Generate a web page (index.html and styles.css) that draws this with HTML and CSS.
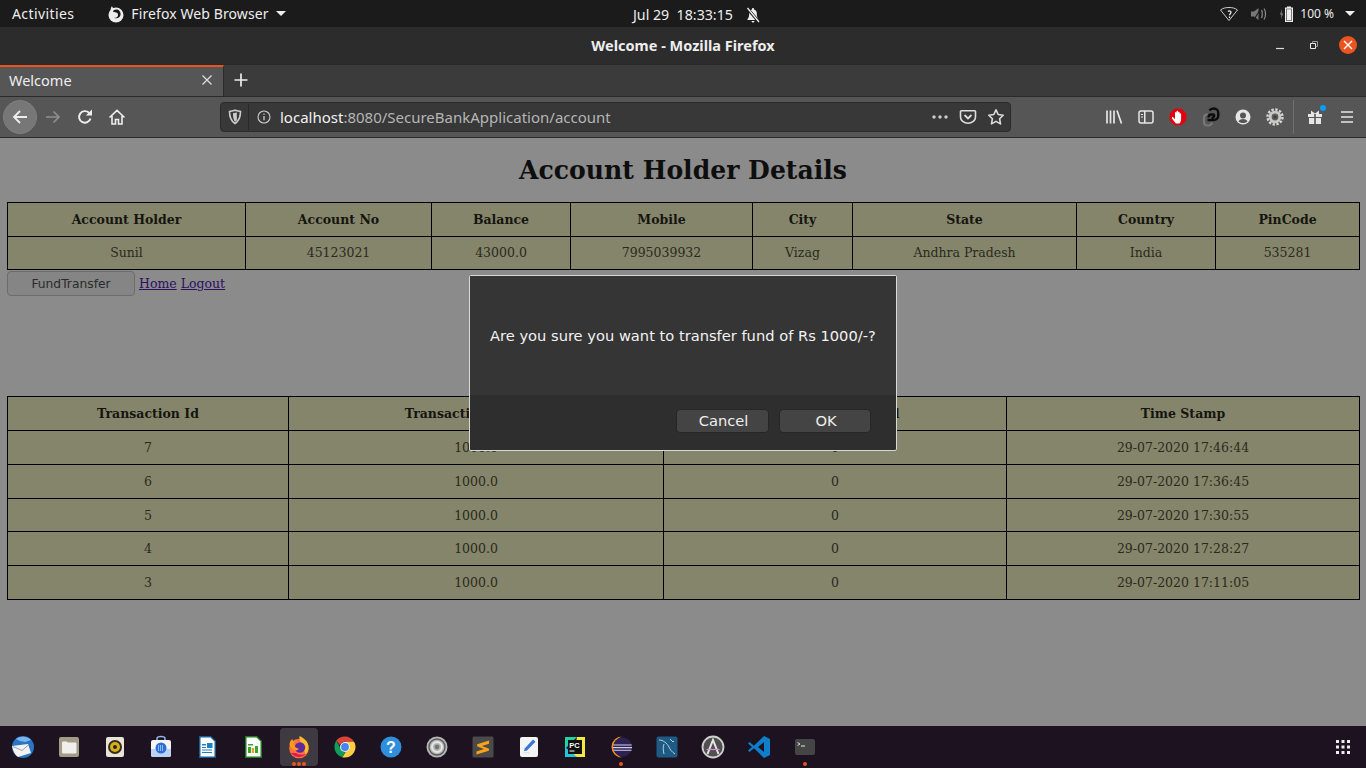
FILE: index.html
```html
<!DOCTYPE html>
<html lang="en">
<head>
	<meta charset="UTF-8" />
	<title>Welcome</title>
	<link rel="stylesheet" href="styles.css">
</head>
<body>

<header class="topbar">
	<div class="topbar-left">
		<span class="activities">Activities</span>
		<span class="app-menu">
			<svg width="16" height="18" viewBox="0 0 16 18"><circle cx="8" cy="10" r="7.500" fill="#eee"/><path fill="#eee" d="M3 6c-.6-1.800-.2-3.500 1-5 .2 1.500 1.200 2.300 3 2.500l1 3z"/><path fill="#1b1b1b" d="M5.500 5.500c1.800-1.300 4.500-1.200 6 .5 1.600 1.800 1.500 4.700-.3 6.300-1.500 1.300-3.700 1.400-5.200.4 1.500.2 3-.3 3.700-1.500.7-1.300.3-2.800-.9-3.400-1-.5-2.200-.2-3.300-.7-.4-.2-.5-.9 0-1.600z"/></svg>
			Firefox Web Browser
			<i class="caret"></i>
		</span>
	</div>
	<div class="clock">
		<span>Jul 29&nbsp;&nbsp;18:33:15</span>
		<svg width="16" height="16" viewBox="0 0 16 16"><path fill="#eee" d="M8 1c-.6 0-1 .4-1 1v.6C5.300 3 4.200 4.500 4.200 6.500c0 3-.6 4.500-1.700 5.500v1h11v-1c-1.100-1-1.700-2.500-1.700-5.500 0-2-1.100-3.500-2.800-3.900V2c0-.6-.4-1-1-1zM6.500 14c0 .8.700 1.500 1.500 1.500s1.500-.7 1.500-1.500z"/><path stroke="#1b1b1b" stroke-width="3" d="M2 1l12 14"/><path stroke="#eee" stroke-width="1.300" d="M2.500 1l11.500 14"/></svg>
	</div>
	<div class="status">
		<svg width="20" height="16" viewBox="0 0 20 16"><path fill="none" stroke="#ccc" d="M1.500 4C4 2 7 1.500 10 1.500s6 .5 8.500 2.500L10 14.500z"/><path fill="none" stroke="#eee" stroke-width="1.300" d="M9 5.500c1-1 3.200-.6 3 1-.1 1.200-1.500 1.300-1.500 2.800M10.500 10.500v1.500"/></svg>
		<svg width="18" height="16" viewBox="0 0 18 16"><path fill="#777" d="M1 5.500h3L8.500 2v12L4 10.500H1z"/><path fill="none" stroke="#8d8d8d" stroke-width="1.200" d="M11.500 4c1 1.200 1 6.500 0 8M14 2.500c2 2.500 2 8.500 0 11"/><path stroke="#1b1b1b" stroke-width="1.200" d="M3 15L12 1"/></svg>
		<span class="battery-group">
			<svg width="18" height="18" viewBox="0 0 18 18"><path fill="#8d8d8d" d="M3 4L1 9.500h1.500L2 14l2-5.500H2.500z"/><path fill="#eee" d="M8 1.500h4v1h2v14.500H6V2.500h2zm-.8 2.200v12.100h5.600V3.700z"/><rect x="7.700" y="4.200" width="4.600" height="11.100" fill="#eee"/></svg>
			<span>100 %</span>
		</span>
		<i class="caret"></i>
	</div>
</header>

<div class="titlebar">
	<span class="window-title">Welcome - Mozilla Firefox</span>
	<div class="window-buttons">
		<svg width="10" height="10" viewBox="0 0 10 10"><path stroke="#ddd" stroke-width="1.200" d="M1 8.500h8"/></svg>
		<svg width="10" height="10" viewBox="0 0 10 10"><path fill="none" stroke="#eee" d="M1.500 3.500h5v5h-5z"/><path fill="none" stroke="#999" d="M3.500 3.500v-2h5v5h-2"/></svg>
		<span class="close-btn">
			<svg width="10" height="10" viewBox="0 0 10 10"><path stroke="#fff" stroke-width="1.300" d="M1 1l8 8M9 1l-8 8"/></svg>
		</span>
	</div>
</div>

<div class="tabbar">
	<div class="tab">
		<span>Welcome</span>
		<svg width="12" height="12" viewBox="0 0 12 12"><path stroke="#ddd" stroke-width="1.300" d="M1.500 1.500l9 9M10.500 1.500l-9 9"/></svg>
	</div>
	<svg class="new-tab" width="16" height="16" viewBox="0 0 16 16"><path stroke="#eee" stroke-width="1.700" d="M8 1.500v13M1.500 8h13"/></svg>
</div>

<div class="toolbar">
	<span class="back-btn">
		<svg width="18" height="18" viewBox="0 0 18 18"><path fill="none" stroke="#eee" stroke-width="1.800" d="M16 9H3M9 3L3 9l6 6"/></svg>
	</span>
	<svg class="forward-btn" width="18" height="18" viewBox="0 0 18 18"><path fill="none" stroke="#8e8e8e" stroke-width="1.700" d="M2 9h13M9.500 3.500L15 9l-5.500 5.500"/></svg>
	<svg class="reload-btn" width="18" height="18" viewBox="0 0 18 18"><path fill="none" stroke="#eee" stroke-width="1.900" d="M14.500 10.500A5.800 5.800 0 1 1 13 4.800"/><path fill="#eee" d="M9.800 7.500H16V1.500z"/></svg>
	<svg class="home-btn" width="18" height="18" viewBox="0 0 18 18"><path fill="none" stroke="#eee" stroke-width="1.600" d="M1.500 9.500L9 2.300l7.500 7.200M4 8v8h3.500v-4.500h3V16H14V8"/></svg>
	<div class="urlbar">
		<svg class="shield" width="14" height="16" viewBox="0 0 14 16"><path fill="none" stroke="#ccc" stroke-width="1.600" d="M1.500 2.500C4 2 5.500 1.700 7 1.200c1.500.5 3 .8 5.500 1.300 0 6-1.500 9.500-5.500 12C3 12 1.500 8.500 1.500 2.500z"/><path fill="#ccc" d="M5 4.300l3.800-.8v8L7 12.700C5.500 11 5 8 5 4.300z"/></svg>
		<span class="url-sep"></span>
		<svg class="info-icon" width="14" height="14" viewBox="0 0 14 14"><circle cx="7" cy="7" r="6" fill="none" stroke="#ccc" stroke-width="1.100"/><path stroke="#ccc" stroke-width="1.300" d="M7 6v4.300M7 3.500v1.300"/></svg>
		<span class="url-text"><b>localhost</b>:8080/SecureBankApplication/account</span>
		<svg class="dots" width="16" height="4" viewBox="0 0 16 4"><circle cx="2" cy="2" r="1.700" fill="#ccc"/><circle cx="8" cy="2" r="1.700" fill="#ccc"/><circle cx="14" cy="2" r="1.700" fill="#ccc"/></svg>
		<svg class="pocket" width="18" height="16" viewBox="0 0 18 16"><path fill="none" stroke="#ddd" stroke-width="1.600" d="M2.300 1.800h13.400c.5 0 .8.300.8.800V8c0 3.500-3.500 6.300-7.500 6.300S1.500 11.500 1.500 8V2.600c0-.5.300-.8.800-.8z"/><path fill="none" stroke="#ddd" stroke-width="1.800" d="M5.500 6L9 9.500 12.500 6"/></svg>
		<svg class="star" width="18" height="18" viewBox="0 0 18 18"><path fill="none" stroke="#ddd" stroke-width="1.600" stroke-linejoin="round" d="M9 1.800l2.200 4.700 5 .7-3.600 3.500.9 5.200L9 13.400l-4.500 2.500.9-5.200-3.600-3.500 5-.7z"/></svg>
	</div>
	<div class="toolbar-right">
		<svg class="tool-icon" width="18" height="16" viewBox="0 0 18 16"><path stroke="#e6e6e6" stroke-width="1.700" d="M2 1.500v13M5.500 1.500v13M9 1.500v13M12 1.500l4.500 13"/></svg>
		<svg class="tool-icon" width="16" height="16" viewBox="0 0 16 16"><rect x="1" y="2" width="14" height="12" rx="2" fill="none" stroke="#e6e6e6" stroke-width="1.500"/><path fill="#e6e6e6" d="M6 2h1.500v12H6zM3 5h2v1H3zM3 7.500h2v1H3z"/></svg>
		<svg class="tool-icon" width="18" height="18" viewBox="0 0 18 18"><path fill="#e3000f" d="M5.500.7h7l4.800 4.800v7l-4.800 4.800h-7L.7 12.500v-7z"/><path fill="#fff" d="M7 15.500c-1.200-1-3-3.500-4-5.200-.5-.9.700-1.600 1.300-.9l1.700 1.900V4.800c0-1 1.400-1 1.500 0V3.500c0-1 1.500-1 1.600 0v1c.1-1 1.500-1 1.500 0v1.300c.2-.9 1.500-.8 1.500.2v5c0 2.100-.8 3.700-1.700 4.500z"/></svg>
		<svg class="tool-icon" width="18" height="20" viewBox="0 0 18 20"><path fill="none" stroke="#777" stroke-width="2.200" d="M6 7.500H5C3 7.500 2 9 2 10.500V15c0 2 1.300 3.500 3.300 3.500h1.400c1.600 0 2.800-1 3.300-3"/><path fill="none" stroke="#0c0c0c" stroke-width="2.400" d="M6.500 10.500c0-2 1.200-3 3-3h1.500c1 0 1.500 1 1 2-.5.800-1.200 1.500-2.500 1.500M5.500 13h6c2.500 0 4.800-1.500 4.800-4.500V6c0-2.700-1.800-4.500-4.500-4.500-2 0-3.400.7-4.300 2"/></svg>
		<svg class="tool-icon" width="16" height="16" viewBox="0 0 16 16"><circle cx="8" cy="8" r="7.500" fill="#e6e6e6"/><circle cx="8" cy="6.500" r="3" fill="#555"/><path fill="#555" d="M3.500 12.500c1-2 2.700-2.600 4.500-2.600s3.500.6 4.500 2.600C11 13.700 9.500 14 8 14s-3-.3-4.500-1.500z"/></svg>
		<svg class="tool-icon" width="18" height="18" viewBox="0 0 18 18"><circle cx="9" cy="9" r="6.300" fill="#c9c9c9"/><circle cx="9" cy="9" r="7.500" fill="none" stroke="#d6d6d6" stroke-width="2.400" stroke-dasharray="2.400 1.530"/><circle cx="9" cy="9" r="3.400" fill="#5e5e58"/><circle cx="9" cy="9" r="1.500" fill="#3e3e3a"/></svg>
		<span class="toolbar-sep"></span>
		<span class="gift">
			<svg width="18" height="18" viewBox="0 0 18 18"><path fill="#e6e6e6" d="M2 6h6.200v3H2zM9.800 6H16v3H9.800zM3 10h5.200v6H3zM9.800 10H15v6H9.800zM5 2.500l4 3 4-3v3.500H5z"/></svg>
			<i class="gift-dot"></i>
		</span>
		<svg class="burger" width="14" height="14" viewBox="0 0 14 14"><path stroke="#e6e6e6" stroke-width="1.700" d="M1 2h12M1 7h12M1 12h12"/></svg>
	</div>
</div>

<main class="page">
	<h1>Account Holder Details</h1>
	<table class="details summary">
		<colgroup>
			<col class="a1"><col class="a2"><col class="a3"><col class="a4"><col class="a5"><col class="a6"><col class="a7"><col class="a8">
		</colgroup>
		<tr>
			<th>Account Holder</th><th>Account No</th><th>Balance</th><th>Mobile</th><th>City</th><th>State</th><th>Country</th><th>PinCode</th>
		</tr>
		<tr>
			<td>Sunil</td><td>45123021</td><td>43000.0</td><td>7995039932</td><td>Vizag</td><td>Andhra Pradesh</td><td>India</td><td>535281</td>
		</tr>
	</table>
	<div class="actions">
		<button class="fund-btn">FundTransfer</button>
		<a href="#">Home</a>
		<a href="#">Logout</a>
	</div>
	<table class="details history">
		<colgroup>
			<col class="t1"><col class="t2"><col class="t3"><col class="t4">
		</colgroup>
		<tr>
			<th>Transaction Id</th><th>Transaction Amount</th><th>Manager Approval</th><th>Time Stamp</th>
		</tr>
		<tr><td>7</td><td>1000.0</td><td>0</td><td>29-07-2020 17:46:44</td></tr>
		<tr><td>6</td><td>1000.0</td><td>0</td><td>29-07-2020 17:36:45</td></tr>
		<tr><td>5</td><td>1000.0</td><td>0</td><td>29-07-2020 17:30:55</td></tr>
		<tr><td>4</td><td>1000.0</td><td>0</td><td>29-07-2020 17:28:27</td></tr>
		<tr><td>3</td><td>1000.0</td><td>0</td><td>29-07-2020 17:11:05</td></tr>
	</table>

	<div class="dialog">
		<div class="dialog-body">Are you sure you want to transfer fund of Rs 1000/-?</div>
		<div class="dialog-foot">
			<button class="dialog-btn cancel">Cancel</button>
			<button class="dialog-btn ok">OK</button>
		</div>
	</div>
</main>

<footer class="dock">
	<span class="dock-item">
		<svg width="26" height="26" viewBox="0 0 26 26"><circle cx="13" cy="13" r="11" fill="#2a76c6"/><path fill="#7db4ea" d="M6 5c4-3 11-3 15 1l-6 2-5-1z"/><path fill="#f2f2f2" d="M2 12l16-2 3 9-13 4c-3-2-5-6-6-11z"/><path fill="none" stroke="#9aa4b0" d="M3 12.500l9 4 7-6"/></svg>
	</span>
	<span class="dock-item">
		<svg width="24" height="24" viewBox="0 0 24 24"><rect x="2" y="2" width="20" height="20" rx="2" fill="#a29b88"/><path fill="#f0efec" d="M5 8c0-1 .5-1.500 1.500-1.500h3l1.500 1h7c1 0 1.500.5 1.500 1.500v8c0 1-.5 1.500-1.500 1.500h-11C5.500 18.500 5 18 5 17z"/></svg>
	</span>
	<span class="dock-item">
		<svg width="24" height="24" viewBox="0 0 24 24"><rect x="3" y="2" width="18" height="20" rx="2" fill="#e8e4d6"/><circle cx="12" cy="12" r="7" fill="#322e20"/><circle cx="12" cy="12" r="5" fill="#d9ad1a"/><circle cx="12" cy="12" r="2" fill="#2a2616"/></svg>
	</span>
	<span class="dock-item">
		<svg width="24" height="24" viewBox="0 0 24 24"><path fill="none" stroke="#8fb4e6" stroke-width="1.500" d="M8 6V3.500C8 2 9.500 1.500 12 1.500s4 .5 4 2V6"/><rect x="2" y="5" width="20" height="17" rx="2" fill="#f5f5f5"/><path fill="#bcd2f3" d="M2 14h20v6c0 1-1 2-2 2H4c-1 0-2-1-2-2z"/><circle cx="12" cy="13" r="5.500" fill="#2c6fd6"/><path stroke="#fff" stroke-width="1" stroke-dasharray="1 1" d="M9 11h6M9 13h6M9 15h6"/></svg>
	</span>
	<span class="dock-item">
		<svg width="24" height="24" viewBox="0 0 24 24"><path fill="#185a92" d="M4 1h12l5 5v17H4z"/><path fill="#fff" d="M5.500 2.500H15.500L19.500 6.500v15h-14z"/><path fill="#1d80c4" d="M7 9h4v1.500H7zM7 12h4v1H7zM7 14.500h10v1H7zM7 17h10v1H7zM12 8h5.500v5H12z"/></svg>
	</span>
	<span class="dock-item">
		<svg width="24" height="24" viewBox="0 0 24 24"><path fill="#1f7a1f" d="M4 1h12l5 5v17H4z"/><path fill="#fff" d="M5.500 2.500H15.500L19.500 6.500v15h-14z"/><path fill="#3aa535" d="M7 9h5v1.500H7zM7 12h3v6H7zM14 11h3v7h-3z"/><path fill="#e6a32a" d="M10.700 13h2.500v5h-2.500z"/></svg>
	</span>
	<span class="dock-item active">
		<svg width="24" height="24" viewBox="0 0 24 24"><circle cx="12" cy="13.500" r="9.800" fill="#ff7139"/><path fill="#ffbd2e" d="M12.500 1c3 1.500 7 4 8.300 7.500 1.500 4 .5 8-2 11l-3-8C14.500 8 12 5 12.500 1z"/><path fill="#e2175b" d="M4 18c4 5 11 5 15 1-3 1-8 1-10-1z"/><circle cx="13" cy="12.500" r="5.200" fill="#5a2ca0"/><path fill="#ff9a1f" d="M2.500 9C3 6 4.500 4.500 5.500 4c-.1 1 .3 1.700.7 2.200C7 5.500 8 5.300 9 5.500c-1 .5-1.800 1.200-2 2.500-.5 3 2 5.500 5 5.500-1 2-4 2.500-6 1-2-1.300-3.500-3.500-3.500-5.500z"/></svg>
		<span class="dock-dots"><i></i><i></i><i></i></span>
	</span>
	<span class="dock-item">
		<svg width="24" height="24" viewBox="0 0 24 24"><path fill="#db4437" d="M12 1.500c3.800 0 7.200 2 9 5.200H12c-2.300 0-4.300 1.400-5 3.600L3.300 5.500C5.300 3 8.400 1.500 12 1.500z"/><path fill="#0f9d58" d="M3.300 5.500L7.800 14c1 1.700 2.500 2.700 4.500 2.700l-3 5.500C4.800 21 1.500 16.800 1.500 12c0-2.400.7-4.700 1.800-6.500z"/><path fill="#ffcd40" d="M21 6.700c1 1.600 1.500 3.400 1.500 5.300 0 5.800-4.700 10.500-10.500 10.500H9.300l4-6.800c1.700-1.800 2-4.600.6-6.700l-1.900-2.300z"/><circle cx="12" cy="12" r="5" fill="#f1f1f1"/><circle cx="12" cy="12" r="3.900" fill="#4285f4"/></svg>
	</span>
	<span class="dock-item">
		<svg width="24" height="24" viewBox="0 0 24 24"><circle cx="12" cy="12" r="10.500" fill="#2f8fdc"/><text x="12" y="18" text-anchor="middle" class="help-mark">?</text></svg>
	</span>
	<span class="dock-item">
		<svg width="24" height="24" viewBox="0 0 24 24"><circle cx="12" cy="12" r="10.500" fill="#b7b7b7"/><circle cx="12" cy="12" r="8" fill="none" stroke="#5d5d5d" stroke-width="1.400"/><circle cx="12" cy="12" r="5" fill="none" stroke="#e6e6e6" stroke-width="2"/><circle cx="12" cy="12" r="2.400" fill="#777"/></svg>
	</span>
	<span class="dock-item">
		<svg width="24" height="24" viewBox="0 0 24 24"><rect x="1.500" y="1.500" width="21" height="21" rx="1.500" fill="#4a4a4a"/><path fill="#f9a21b" d="M18 5.500L7 9c-1.500.5-1.500 2 0 2.700l6 2.300-7.500 2.500v3L17 16c1.500-.5 1.500-2.300 0-2.800l-6-2.200 7-2.300z"/></svg>
	</span>
	<span class="dock-item">
		<svg width="24" height="24" viewBox="0 0 24 24"><rect x="3" y="2" width="18" height="20" rx="2" fill="#f4f4f4"/><path fill="#3b74d8" d="M16 4.500l2.500 2.200-8.500 8.800-3 .8.800-3z"/><path fill="#c8d4e8" d="M6.500 17.500h6v.7h-6z"/></svg>
	</span>
	<span class="dock-item">
		<svg width="24" height="24" viewBox="0 0 24 24"><path fill="#20d3a0" d="M2 2h12l-12 12z"/><path fill="#f5e642" d="M14 2h8v20H10z"/><path fill="#21c7d8" d="M2 12l12 10H2z"/><rect x="5" y="5" width="14" height="14" fill="#111"/><text x="6.300" y="12.500" class="pc-mark">PC</text><path stroke="#fff" stroke-width="1" d="M6.500 16h5"/></svg>
	</span>
	<span class="dock-item">
		<svg width="24" height="24" viewBox="0 0 24 24"><path fill="#f7941e" d="M13 1.500A10.500 10.500 0 1 0 13 22.500 11 11 0 0 1 13 1.500z"/><circle cx="13.500" cy="12" r="9.500" fill="#2c2255"/><path fill="#d6d0e8" d="M4.300 9.500h18.400v1H4.300zM4 12h19v1.200H4zM4.500 14.700h18v1H4.500z"/></svg>
		<i class="run-dot"></i>
	</span>
	<span class="dock-item">
		<svg width="24" height="24" viewBox="0 0 24 24"><rect x="1.500" y="1.500" width="21" height="21" rx="2" fill="#1d5b85"/><path fill="none" stroke="#b8cfdf" stroke-width="1" d="M4 5c4 0 8 3 10 7 1 2.500 3 5 6 7M9 9c-1 3-1 6 0 10M15 4l3 3 1-1"/></svg>
	</span>
	<span class="dock-item">
		<svg width="24" height="24" viewBox="0 0 24 24"><circle cx="12" cy="12" r="10.500" fill="#505050" stroke="#cfcfcf" stroke-width="1.800"/><path fill="none" stroke="#e6e6e6" stroke-width="2" d="M6.500 19L12 5l5.500 14"/><path stroke="#d98ad0" stroke-width="1.200" d="M5.500 14.500h13"/></svg>
	</span>
	<span class="dock-item">
		<svg width="24" height="24" viewBox="0 0 24 24"><path fill="#0f7fcc" d="M17 1l6 3v16l-6 3-10-9.700L2.500 17 1 15.500 5 12 1 8.500 2.500 7 7 10.700zM17 7l-6 5 6 5z"/></svg>
	</span>
	<span class="dock-item">
		<svg width="24" height="24" viewBox="0 0 24 24"><rect x="2" y="4" width="20" height="16" rx="2" fill="#454545"/><path fill="none" stroke="#e6e6e6" stroke-width=".9" d="M4.500 7.500l2.500 1.500-2.500 1.500"/><path stroke="#e6e6e6" d="M8 11h4"/></svg>
		<i class="run-dot"></i>
	</span>
	<span class="dock-grid">
		<svg width="16" height="16" viewBox="0 0 16 16"><g fill="#eee"><rect x="1" y="1" width="3" height="3"/><rect x="6.500" y="1" width="3" height="3"/><rect x="12" y="1" width="3" height="3"/><rect x="1" y="6.500" width="3" height="3"/><rect x="6.500" y="6.500" width="3" height="3"/><rect x="12" y="6.500" width="3" height="3"/><rect x="1" y="12" width="3" height="3"/><rect x="6.500" y="12" width="3" height="3"/><rect x="12" y="12" width="3" height="3"/></g></svg>
	</span>
</footer>

</body>
</html>
```

FILE: styles.css
```css
* {
	box-sizing: border-box;
}

html, body {
	height: 100%;
}

body {
	margin: 0;
	width: 1366px;
	height: 768px;
	overflow: hidden;
	display: flex;
	flex-direction: column;
	font-family: "Noto Sans", sans-serif;
	background: #8b8b8b;
}

svg {
	display: block;
	flex: none;
}

/* gnome top bar */
.topbar {
	height: 27px;
	background: #1b1b1b;
	color: #eee;
	font-size: 14px;
	display: flex;
	align-items: center;
	justify-content: space-between;
	padding: 0 12px;
	position: relative;
}

.topbar-left {
	display: flex;
	align-items: center;
	gap: 34px;
}

.activities {
	letter-spacing: .4px;
}

.app-menu {
	display: flex;
	align-items: center;
	gap: 7px;
	letter-spacing: .1px;
}

.caret {
	width: 0;
	height: 0;
	border-left: 5px solid transparent;
	border-right: 5px solid transparent;
	border-top: 5px solid #eee;
	display: block;
}

.clock {
	position: absolute;
	left: 633px;
	top: 5px;
	display: flex;
	gap: 12px;
	align-items: center;
	font-size: 14.2px;
}

.status {
	display: flex;
	align-items: center;
	gap: 11px;
	margin-right: -1px;
}

.battery-group {
	display: flex;
	align-items: center;
	gap: 3px;
	font-size: 12px;
}

/* window title bar */
.titlebar {
	height: 37px;
	background: #2c2c2c;
	color: #eee;
	font-size: 14.5px;
	font-weight: 700;
	display: flex;
	align-items: center;
	justify-content: center;
	padding-bottom: 2px;
	position: relative;
}

.window-buttons {
	position: absolute;
	right: 9px;
	top: 9px;
	display: flex;
	align-items: center;
	gap: 24px;
}

.close-btn {
	width: 18px;
	height: 18px;
	margin-left: -4px;
	border-radius: 50%;
	background: #e95420;
	display: flex;
	align-items: center;
	justify-content: center;
}

/* tabs */
.tabbar {
	height: 33px;
	background: #3b3b3b;
	display: flex;
	align-items: center;
	border-top: 1px solid #2a2a2a;
	border-bottom: 1px solid #2a2a2a;
}

.tab {
	width: 224px;
	height: 31px;
	background: #565656;
	border-top: 2px solid #e95420;
	border-right: 1px solid #2a2a2a;
	color: #eee;
	font-size: 14.5px;
	display: flex;
	align-items: center;
	justify-content: space-between;
	padding: 0 10px 3px 9px;
}

.new-tab {
	margin-left: 9px;
	margin-top: -1px;
}

/* nav toolbar */
.toolbar {
	height: 41px;
	background: #565656;
	border-bottom: 1px solid #2a2a2a;
	display: flex;
	align-items: center;
	position: relative;
	padding-left: 3px;
}

.back-btn {
	width: 34px;
	height: 34px;
	border-radius: 50%;
	border: 1px solid #7e7e7e;
	background: #777;
	display: flex;
	align-items: center;
	justify-content: center;
}

.forward-btn {
	margin-left: 7px;
}

.reload-btn {
	margin-left: 14px;
}

.home-btn {
	margin-left: 14px;
}

.urlbar {
	width: 791px;
	height: 30px;
	margin-left: 94px;
	background: #383838;
	border: 1px solid #2b2b2b;
	border-radius: 4px;
	color: #b5b5b5;
	font-size: 15px;
	display: flex;
	align-items: center;
	gap: 6px;
	padding: 0 5px 0 7px;
}

.url-sep {
	width: 1px;
	height: 26px;
	background: #2a2a2a;
}

.info-icon {
	margin-left: 2px;
}

.url-text {
	flex: 1;
	margin-left: 3px;
}

.url-text b {
	color: #f2f2f2;
	font-weight: 400;
}

.dots {
	margin-right: 5px;
}

.pocket {
	margin-right: 4px;
}

.toolbar-right {
	position: absolute;
	left: 1105px;
	top: 0;
	height: 40px;
	display: flex;
	align-items: center;
}

.tool-icon {
	margin-right: 15px;
}

.toolbar-sep {
	width: 1px;
	height: 34px;
	background: #707070;
	margin: 0 12px 0 -6px;
}

.gift {
	position: relative;
	margin-right: 16px;
}

.gift-dot {
	position: absolute;
	right: -2px;
	top: -3px;
	width: 6px;
	height: 6px;
	border-radius: 50%;
	background: #0a9dff;
}

/* page content, dimmed behind dialog */
.page {
	flex: 1;
	background: #8b8b8b;
	color: #0e0e0e;
	font-family: "DejaVu Serif", serif;
	font-size: 12.5px;
	padding: 0 7px;
	position: relative;
}

h1 {
	margin: 0;
	padding-top: 16px;
	height: 64px;
	text-align: center;
	font-size: 25.1px;
	line-height: 32px;
	font-weight: 700;
}

.details {
	width: 1352px;
	table-layout: fixed;
	border-collapse: collapse;
	background: #85856b;
	color: #15150f;
}

.details th, .details td {
	border: 1px solid #000;
	text-align: center;
	padding: 0;
	height: 33.7px;
}

.details td {
	color: #2a2a1c;
}

.summary td {
	height: 33px;
}

.details.history th {
	height: 34.6px;
}

.a1 { width: 238px; }
.a2 { width: 186px; }
.a3 { width: 139px; }
.a4 { width: 182px; }
.a5 { width: 100px; }
.a6 { width: 224px; }
.a7 { width: 139px; }
.a8 { width: 144px; }

.t1 { width: 281px; }
.t2 { width: 375px; }
.t3 { width: 343px; }
.t4 { width: 353px; }

.actions {
	height: 126px;
	padding-top: 1px;
	display: flex;
	align-items: flex-start;
	gap: 4px;
	line-height: 26px;
}

.fund-btn {
	width: 128px;
	height: 25px;
	padding: 2px 0 0;
	background: #858585;
	border: 1px solid #6c6c6c;
	border-radius: 4px;
	color: #2b2b2b;
	font-family: "DejaVu Sans", sans-serif;
	font-size: 12.3px;
}

.actions a {
	color: #2d0f63;
}

/* confirm dialog */
.dialog {
	position: absolute;
	left: 469px;
	top: 137px;
	width: 428px;
	height: 176px;
	background: #2e2e2e;
	border: 1px solid #d8d8d8;
	border-radius: 2px;
	font-family: "DejaVu Sans", sans-serif;
	color: #f2f2f2;
	display: flex;
	flex-direction: column;
}

.dialog-body {
	height: 119px;
	background: #353535;
	font-size: 14.67px;
	padding: 51px 0 0 20px;
	line-height: 17px;
}

.dialog-foot {
	flex: 1;
	display: flex;
	gap: 10px;
	padding: 14px 25px 0 206px;
}

.dialog-btn {
	height: 24px;
	background: #444;
	border: 1px solid #262626;
	border-radius: 4px;
	color: #eee;
	font-family: "DejaVu Sans", sans-serif;
	font-size: 14.67px;
	padding: 0 0 2px 2px;
}

.cancel { width: 93px; }
.ok { width: 92px; }

/* dock */
.dock {
	height: 42px;
	background: #1d1320;
	display: flex;
	align-items: center;
	gap: 8px;
	padding-left: 4px;
	position: relative;
}

.dock-item {
	width: 38px;
	height: 38px;
	display: flex;
	align-items: center;
	justify-content: center;
	position: relative;
	flex: none;
}

.dock-item.active {
	background: #3f3a42;
	border-radius: 4px;
}

.dock-dots {
	position: absolute;
	bottom: 0;
	left: 12px;
	display: flex;
	gap: 1px;
}

.dock-dots i, .run-dot {
	display: block;
	width: 4px;
	height: 4px;
	border-radius: 50%;
	background: #e95420;
}

.run-dot {
	position: absolute;
	bottom: 0;
	left: 17px;
}

.dock-grid {
	position: absolute;
	right: 15px;
	top: 13px;
}

.help-mark {
	fill: #fff;
	font-family: "Liberation Sans", sans-serif;
	font-size: 16px;
	font-weight: 700;
}

.pc-mark {
	fill: #fff;
	font-family: "Liberation Sans", sans-serif;
	font-size: 7.5px;
	font-weight: 700;
}
```
